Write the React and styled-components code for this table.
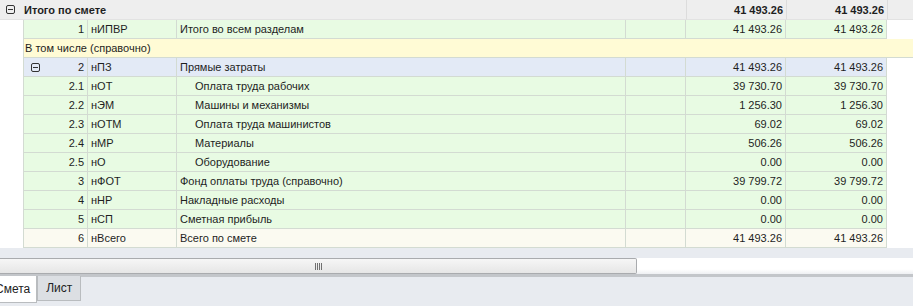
import React from "react";
import styled, { createGlobalStyle } from "styled-components";

const GlobalStyle = createGlobalStyle`
  html, body {
    margin: 0;
    padding: 0;
    background: #ffffff;
  }
  body {
    font-family: Tahoma, "Liberation Sans", Arial, sans-serif;
    font-size: 11px;
    color: #1e1e1e;
  }
`;

const colors = {
  green: "#e8fbe3",
  yellow: "#fffbd5",
  blue: "#e3eaf6",
  cream: "#fbfaf1",
  head: "#eeeeee",
  line: "#d3dbd2",
};

const COLS = [65, 89, 449, 60, 100, 101];

const Page = styled.div`
  width: 913px;
  height: 306px;
  display: flex;
  flex-direction: column;
  background: #e8ebf0;
  overflow: hidden;
`;

const Grid = styled.div`
  height: 248px;
  background: #ffffff;
  display: flex;
  flex-direction: column;
`;

const HeadRow = styled.div`
  display: flex;
  height: 20px;
  background: ${colors.head};
  font-weight: bold;
  font-size: 11px;
`;

const HeadTitle = styled.div`
  width: 686px;
  display: flex;
  align-items: center;
  padding-left: 6px;
  box-sizing: border-box;
  gap: 9px;
  border-bottom: 1px solid #e2e2e2;
`;

const HeadAmount = styled.div`
  width: ${({ w }) => w}px;
  box-sizing: border-box;
  border-left: 1px solid #dcdcdc;
  border-bottom: 1px solid #e2e2e2;
  display: flex;
  align-items: center;
  justify-content: flex-end;
  padding-right: 3px;
`;

const HeadFill = styled.div`
  flex: 1;
  border-left: 1px solid #dcdcdc;
  border-bottom: 1px solid #e2e2e2;
`;

const Row = styled.div`
  display: flex;
  height: 19px;
  margin-left: 23px;
`;

const Cell = styled.div`
  width: ${({ w }) => w}px;
  box-sizing: border-box;
  background: ${({ bg }) => bg};
  border-right: 1px solid ${colors.line};
  border-bottom: 1px solid ${colors.line};
  display: flex;
  align-items: center;
  justify-content: ${({ right }) => (right ? "flex-end" : "flex-start")};
  padding: ${({ right, indent }) =>
    right ? "0 3px 0 0" : `0 0 0 ${3 + (indent || 0)}px`};
  white-space: nowrap;
  overflow: hidden;
  &:first-child {
    border-left: 1px solid ${colors.line};
  }
`;

const NumCell = styled(Cell)`
  justify-content: space-between;
  padding-left: 7px;
`;

const Fill = styled.div`
  flex: 1;
`;

const NoteRow = styled.div`
  height: 19px;
  margin-left: 23px;
  background: ${colors.yellow};
  border-left: 1px solid ${colors.line};
  border-bottom: 1px solid ${colors.line};
  box-sizing: border-box;
  display: flex;
  align-items: center;
  padding-left: 1px;
`;

const Bottom = styled.div`
  flex: 1;
  display: flex;
  flex-direction: column;
`;

const Gap = styled.div`
  height: 10px;
  background: #e8ebf0;
`;

const ScrollTrack = styled.div`
  height: 16px;
  display: flex;
  background: linear-gradient(#ffffff 0%, #ffffff 70%, #eef0f3 100%);
  border-bottom: 3px solid #c3c6ca;
`;

const ScrollThumb = styled.div`
  width: 637px;
  box-sizing: border-box;
  border: 1px solid #a9abae;
  border-left: none;
  border-radius: 0 2px 2px 0;
  background: linear-gradient(#f6f6f6, #e6e6e6);
  display: flex;
  align-items: center;
  justify-content: center;
  gap: 1px;
`;

const Grip = styled.span`
  width: 1px;
  height: 7px;
  background: #707070;
`;

const Tabs = styled.div`
  display: flex;
  align-items: flex-start;
  height: 30px;
  margin-top: -1px;
`;

const Tab = styled.div`
  height: ${({ active }) => (active ? 27 : 25)}px;
  box-sizing: border-box;
  padding: 0 ${({ active }) => (active ? "6px 0 0" : "8px")};
  display: flex;
  align-items: center;
  background: ${({ active }) => (active ? "#ffffff" : "#dcdfe3")};
  border: 1px solid #b9bcbf;
  border-top: none;
  border-left: ${({ active }) => (active ? "none" : "1px solid #b9bcbf")};
  margin-left: ${({ active }) => (active ? "-5px" : "0")};
  font-size: 12px;
  color: #222;
`;

const CollapseIcon = () => (
  <svg width="9" height="9" viewBox="0 0 9 9">
    <rect x="0.5" y="0.5" width="8" height="8" rx="1.5" fill="none" stroke="#333" />
    <line x1="2" y1="4.5" x2="7" y2="4.5" stroke="#333" />
  </svg>
);

const rows = [
  { type: "row", n: "1", code: "нИПВР", name: "Итого во всем разделам", a: "41 493.26", bg: colors.green },
  { type: "note", text: "В том числе (справочно)" },
  { type: "row", n: "2", code: "нПЗ", name: "Прямые затраты", a: "41 493.26", bg: colors.blue, open: true },
  { type: "row", n: "2.1", code: "нОТ", name: "Оплата труда рабочих", a: "39 730.70", bg: colors.green, indent: 15 },
  { type: "row", n: "2.2", code: "нЭМ", name: "Машины и механизмы", a: "1 256.30", bg: colors.green, indent: 15 },
  { type: "row", n: "2.3", code: "нОТМ", name: "Оплата труда машинистов", a: "69.02", bg: colors.green, indent: 15 },
  { type: "row", n: "2.4", code: "нМР", name: "Материалы", a: "506.26", bg: colors.green, indent: 15 },
  { type: "row", n: "2.5", code: "нО", name: "Оборудование", a: "0.00", bg: colors.green, indent: 15 },
  { type: "row", n: "3", code: "нФОТ", name: "Фонд оплаты труда (справочно)", a: "39 799.72", bg: colors.green },
  { type: "row", n: "4", code: "нНР", name: "Накладные расходы", a: "0.00", bg: colors.green },
  { type: "row", n: "5", code: "нСП", name: "Сметная прибыль", a: "0.00", bg: colors.green },
  { type: "row", n: "6", code: "нВсего", name: "Всего по смете", a: "41 493.26", bg: colors.cream },
];

export default function App() {
  return (
    <Page>
      <GlobalStyle />
      <Grid>
        <HeadRow>
          <HeadTitle>
            <CollapseIcon />
            <span>Итого по смете</span>
          </HeadTitle>
          <HeadAmount w={COLS[4]}>41 493.26</HeadAmount>
          <HeadAmount w={COLS[5]}>41 493.26</HeadAmount>
          <HeadFill />
        </HeadRow>
        {rows.map((r, i) =>
          r.type === "note" ? (
            <NoteRow key={i}>{r.text}</NoteRow>
          ) : (
            <Row key={i}>
              {r.open ? (
                <NumCell w={COLS[0]} bg={r.bg} right>
                  <CollapseIcon />
                  <span>{r.n}</span>
                </NumCell>
              ) : (
                <Cell w={COLS[0]} bg={r.bg} right>
                  {r.n}
                </Cell>
              )}
              <Cell w={COLS[1]} bg={r.bg}>{r.code}</Cell>
              <Cell w={COLS[2]} bg={r.bg} indent={r.indent}>{r.name}</Cell>
              <Cell w={COLS[3]} bg={r.bg} />
              <Cell w={COLS[4]} bg={r.bg} right>{r.a}</Cell>
              <Cell w={COLS[5]} bg={r.bg} right>{r.a}</Cell>
              <Fill />
            </Row>
          )
        )}
      </Grid>
      <Bottom>
        <Gap />
        <ScrollTrack>
          <ScrollThumb>
            <Grip />
            <Grip />
            <Grip />
            <Grip />
          </ScrollThumb>
        </ScrollTrack>
        <Tabs>
          <Tab active>Смета</Tab>
          <Tab>Лист</Tab>
        </Tabs>
      </Bottom>
    </Page>
  );
}
